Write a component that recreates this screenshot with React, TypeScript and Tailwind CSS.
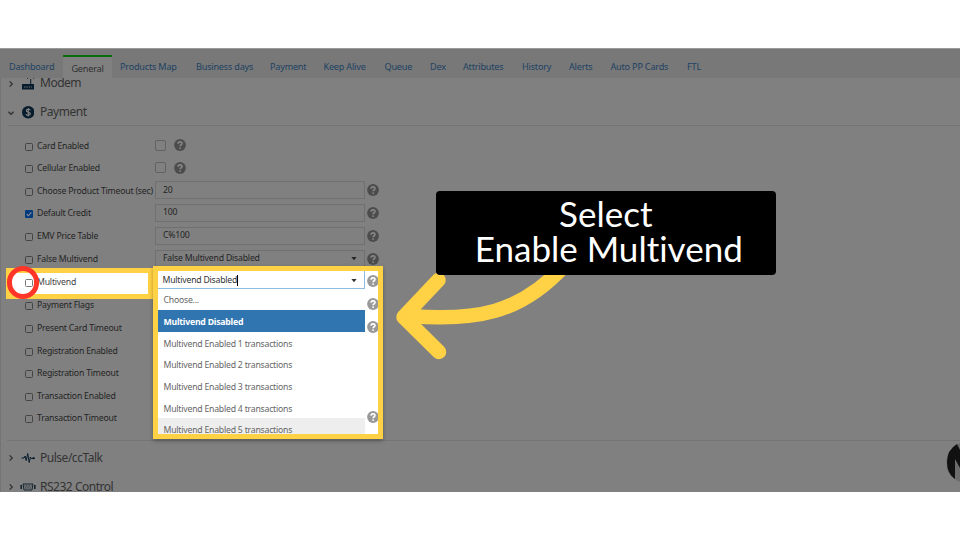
import React from 'react';

const tabs = [
  { name: 'Dashboard', width: 'w-[54px]' },
  { name: 'General', width: 'w-[49px]', active: true },
  { name: 'Products Map', width: 'w-[84px]' },
  { name: 'Business days', width: 'w-[74px]' },
  { name: 'Payment', width: 'w-[53.5px]' },
  { name: 'Keep Alive', width: 'w-[61px]' },
  { name: 'Queue', width: 'w-[45.5px]' },
  { name: 'Dex', width: 'w-[33px]' },
  { name: 'Attributes', width: 'w-[59px]' },
  { name: 'History', width: 'w-[47px]' },
  { name: 'Alerts', width: 'w-[41.5px]' },
  { name: 'Auto PP Cards', width: 'w-[76.5px]' },
  { name: 'FTL', width: 'w-[40px]' },
];

type Field = { label: string; height: string; kind?: 'check' | 'text' | 'select'; value?: string; checked?: boolean };

const fields: Field[] = [
  { label: 'Card Enabled', height: 'h-[22.5px]', kind: 'check' },
  { label: 'Cellular Enabled', height: 'h-[22.5px]', kind: 'check' },
  { label: 'Choose Product Timeout (sec)', height: 'h-[22.5px]', kind: 'text', value: '20' },
  { label: 'Default Credit', height: 'h-[22.5px]', kind: 'text', value: '100', checked: true },
  { label: 'EMV Price Table', height: 'h-[23px]', kind: 'text', value: 'C%100' },
  { label: 'False Multivend', height: 'h-[23px]', kind: 'select', value: 'False Multivend Disabled' },
  { label: 'Multivend', height: 'h-[23px]' },
  { label: 'Payment Flags', height: 'h-[23px]' },
  { label: 'Present Card Timeout', height: 'h-[23px]' },
  { label: 'Registration Enabled', height: 'h-[22.5px]' },
  { label: 'Registration Timeout', height: 'h-[22.5px]' },
  { label: 'Transaction Enabled', height: 'h-[22.5px]' },
  { label: 'Transaction Timeout', height: 'h-[22.5px]' },
];

const options = [
  'Multivend Enabled 1 transactions',
  'Multivend Enabled 2 transactions',
  'Multivend Enabled 3 transactions',
  'Multivend Enabled 4 transactions',
];

const Help: React.FC<{ light?: boolean }> = ({ light }) => {
  const mark = light ? '#fff' : '#858585';
  return (
    <svg viewBox="0 0 12 12" className="size-3 shrink-0">
      <circle cx="6" cy="6" r="5.9" fill={light ? '#999' : '#4c4c4c'} />
      <path d="M4.1 4.8C4.1 2.3 8 2.3 8 4.5C8 5.8 6.1 5.7 6.1 7.3" fill="none" stroke={mark} strokeWidth="1.6" />
      <circle cx="6.1" cy="9.1" r="0.95" fill={mark} />
    </svg>
  );
};

const Caret: React.FC = () => (
  <svg viewBox="0 0 6 4" className="h-[3.5px] w-1.5">
    <path d="M0 0H6L3 3.8Z" fill="currentColor" />
  </svg>
);

const Box: React.FC<{ checked?: boolean }> = ({ checked }) =>
  checked ? (
    <svg viewBox="0 0 8 8" className="size-2 shrink-0">
      <rect width="8" height="8" rx="1" fill="#003b80" />
      <path d="M1.7 4.2L3.3 5.8L6.4 2.3" fill="none" stroke="#909090" strokeWidth="1.1" />
    </svg>
  ) : (
    <span className="size-2 shrink-0 rounded-[1.5px] border border-[#444]" />
  );

const Section: React.FC<{ title: string; icon: React.ReactNode; open?: boolean }> = ({ title, icon, open }) => (
  <div className="flex h-[29px] shrink-0 items-center">
    <svg viewBox="0 0 6 6" className="ml-[7px] size-1.5" fill="none" stroke="#303030" strokeWidth="1.2">
      <path d={open ? 'M0.4 1.8L3 4.3L5.6 1.8' : 'M1.6 0.4L4.3 3L1.6 5.6'} />
    </svg>
    <span className="ml-[6px] flex w-4 justify-center">{icon}</span>
    <span className="-mt-px ml-1 text-[12px] tracking-[-0.48px] text-[#333]">{title}</span>
  </div>
);

const ModemIcon = (
  <svg viewBox="0 0 14 14" className="-mt-px size-3.5">
    <path d="M1 8H13V13.5H1Z M9.2 3H10.2V8H9.2Z" fill="#071c2c" />
    <path d="M5.5 0.5Q5.5 2 7 2.6M14 0.5Q14 2 12.5 2.6M8 0.5L8.5 2M11.5 0.5L11 2" stroke="#071c2c" fill="none" />
    <path d="M3 11H11" stroke="#777" strokeDasharray="1.4 1" />
  </svg>
);

const DollarIcon = (
  <svg viewBox="0 0 12 12" className="size-[12.5px]">
    <circle cx="6" cy="6" r="6" fill="#071c2c" />
    <path d="M8 4.2C7.6 2.7 4.2 2.8 4.2 4.6C4.2 6.4 8 5.5 8 7.4C8 9.3 4.2 9.3 3.9 7.7M6 2V10" fill="none" stroke="#858585" strokeWidth="1.1" />
  </svg>
);

const PulseIcon = (
  <svg viewBox="0 0 14 10" className="h-2.5 w-3.5">
    <path d="M0.5 5H3L4 3L5.2 7.5L6.7 0.5L8.2 9.5L9.4 4L10.2 5.5H13.5" fill="none" stroke="#071c2c" strokeWidth="1" />
    <circle cx="12.6" cy="5.2" r="1.1" fill="#071c2c" />
  </svg>
);

const SerialIcon = (
  <svg viewBox="0 0 16 8" className="h-2 w-4" fill="none" stroke="#14252f">
    <path d="M3 1H13L12 7H4Z" />
    <path d="M4.5 3H11.5M5 5H11" strokeDasharray="1 0.6" />
    <path d="M1.2 2V6M14.8 2V6" strokeWidth="1.6" />
  </svg>
);

const FieldRow: React.FC<{ field: Field }> = ({ field }) => (
  <div className={`flex items-center ${field.height}`}>
    <div className="flex w-[130.5px] shrink-0 items-center gap-[4.5px] whitespace-nowrap">
      <Box checked={field.checked} />
      <span className="-mt-px text-[8.7px] tracking-[-0.2px]">{field.label}</span>
    </div>
    {field.kind === 'check' && (
      <div className="-mt-[3px] flex items-center gap-2">
        <span className="size-[11px] rounded-[2px] border-[1.5px] border-[#626262]" />
        <Help />
      </div>
    )}
    {(field.kind === 'text' || field.kind === 'select') && (
      <div className="-mt-[3px] flex items-center gap-[2.5px]">
        <div className="flex h-[18px] w-[209.5px] items-center justify-between border border-[#707070] px-[7px] text-[8.7px] tracking-[-0.2px]">
          <span>{field.value}</span>
          {field.kind === 'select' && <Caret />}
        </div>
        <Help />
      </div>
    )}
  </div>
);

const Dropdown: React.FC = () => (
  <div className="absolute left-[152.5px] top-[217px] flex h-[172.5px] w-[230.5px] overflow-hidden border-5 border-[#ffd144] bg-white shadow-[0_2px_4px_rgba(0,0,0,0.3)]">
    <div className="w-[207px] shrink-0 text-[8.7px] tracking-[-0.22px] text-[#666]">
      <div className="flex h-[18px] items-center justify-between border-b border-r border-[#8fbbe0] pl-[5px] pr-[7px] pt-0.5 text-[#333]">
        <span className="border-r border-black leading-[11px]">Multivend Disabled</span>
        <Caret />
      </div>
      <div className="flex h-[21px] items-center pl-1.5 pt-[3px]">Choose...</div>
      <div className="flex h-[22px] items-center bg-[#3175b0] pl-1.5 pt-[3px] font-bold text-white">Multivend Disabled</div>
      {options.map((option) => (
        <div key={option} className="flex h-[21.6px] items-center pl-1.5 pt-[3px]">{option}</div>
      ))}
      <div className="flex h-[22px] items-center bg-[#eee] pl-1.5 pt-[3px]">Multivend Enabled 5 transactions</div>
    </div>
    <div className="flex flex-col items-center gap-[11px] pl-[2.5px] pt-[4px]">
      <Help light />
      <Help light />
      <Help light />
      <div className="mt-[67px] flex">
        <Help light />
      </div>
    </div>
  </div>
);

export default function App() {
  return (
    <div className="h-[540px] w-[960px] overflow-hidden bg-white pt-12 font-['Noto_Sans',sans-serif]">
      <div className="relative h-[443.5px] overflow-hidden border-t border-[#999] bg-[#808080] text-[#242424]">
        <nav className="flex h-[29px] items-end bg-[#787878] pl-[9px] text-[9.1px] tracking-[-0.2px] text-[#1d4263]">
          {tabs.map((tab) =>
            tab.active ? (
              <div key={tab.name} className={`mr-2 flex h-[23px] items-center justify-center border-t-2 border-[#0c6a0c] bg-[#808080] pt-[3px] text-[#303030] ${tab.width}`}>
                {tab.name}
              </div>
            ) : (
              <div key={tab.name} className={`h-[18.5px] whitespace-nowrap leading-[13px] ${tab.width} ${tab.name === 'Products Map' ? '-mr-2' : ''}`}>
                {tab.name}
              </div>
            )
          )}
        </nav>
        <main className="border-l border-[#747474]">
          <div className="flex h-[20px] items-end overflow-hidden">
            <Section title="Modem" icon={ModemIcon} />
          </div>
          <Section title="Payment" icon={DollarIcon} open />
          <div className="-mt-[2px] ml-1.5 border-b border-t border-b-[#747474] border-t-[#747474] pb-[9px] pl-[17.5px] pt-[9.5px]">
            {fields.map((field) => (
              <FieldRow key={field.label} field={field} />
            ))}
          </div>
          <div className="pt-[3px]">
            <Section title="Pulse/ccTalk" icon={PulseIcon} />
            <Section title="RS232 Control" icon={SerialIcon} />
          </div>
        </main>

        <div className="absolute left-[6px] top-[218.5px] flex h-[31.5px] w-[147px] items-center border-5 border-[#ffd144] bg-white pl-[13.5px] text-[8.7px] tracking-[-0.2px] text-[#444]">
          <span className="mr-[4.5px] size-2 rounded-[1.5px] border border-[#777]" />
          <span className="-mt-0.5">Multivend</span>
        </div>
        <Dropdown />
        <div className="absolute left-[6.5px] top-[217px] size-[32.5px] rounded-full border-[5px] border-[#ff3528]" />

        <svg viewBox="390 260 190 110" className="absolute left-[390px] top-[211px] h-[110px] w-[190px]" fill="none" stroke="#ffd144" strokeWidth="14.5" strokeLinecap="round" strokeLinejoin="round">
          <path d="M438.5 280L403.5 317L439 352" />
          <path d="M410 316C475 321 520 314 564 266" />
        </svg>
        <div className="absolute left-[435.5px] top-[141.5px] flex h-[84px] w-[340.5px] flex-col items-center rounded-[4px] bg-black pt-[5px] font-['Lato',sans-serif] text-[35px] leading-[35px] text-white [font-variant-ligatures:none]">
          <span>Select</span>
          <span className="whitespace-nowrap pl-[6px]">Enable Multivend</span>
        </div>
        <svg viewBox="0 0 16 42" className="absolute left-[944px] top-[392px] h-[42px] w-4">
          <path d="M16 2Q2.5 8 2.5 22Q2.5 35 16 41Z" fill="#6c6c6c" />
          <path d="M13 3Q3 9 3 21Q3 33 11 38V18L16 27V9Z" fill="#111" />
        </svg>
      </div>
    </div>
  );
}
